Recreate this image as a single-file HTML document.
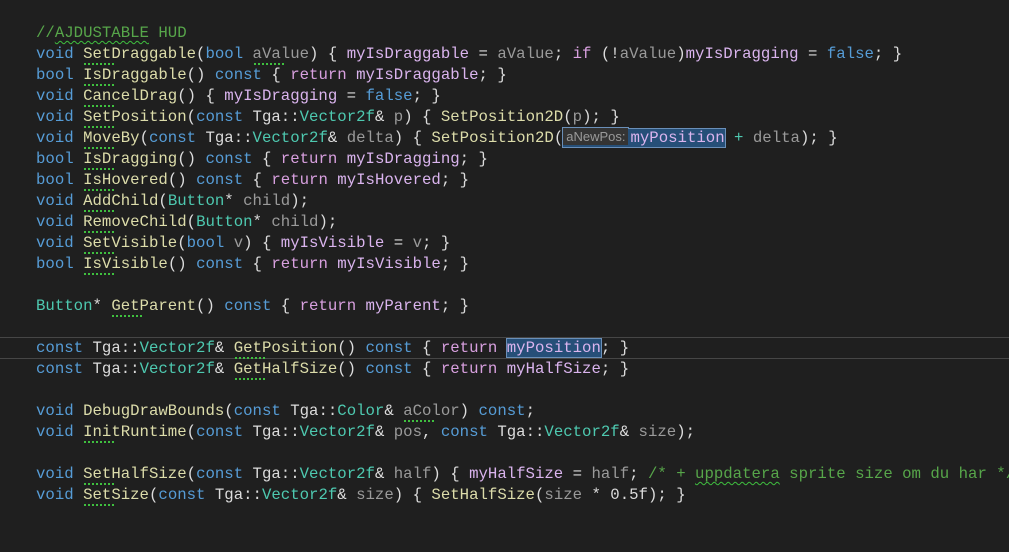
<!DOCTYPE html>
<html><head><meta charset="utf-8"><style>
html,body{margin:0;padding:0;background:#1f1f1f;width:1009px;height:552px;overflow:hidden}
#ed{position:absolute;left:36px;top:23px;font-family:"Liberation Mono",monospace;font-size:15.7px;line-height:21px;color:#dcdcdc}
.l{height:21px;white-space:pre}
.k{color:#569cd6}.f{color:#dcdcaa}.t{color:#4ec9b0}.m{color:#dab4ee}.c{color:#d8a0df}.p{color:#9a9a9a}.g{color:#57a64a}
.d{position:relative}
.d::after{content:"";position:absolute;left:1px;width:30px;bottom:-2px;border-bottom:2px dotted #3fbf3f}
.w{text-decoration:underline wavy #3fbf3f;text-decoration-thickness:1px;text-underline-offset:3px}
.hint{display:inline-block;background:#343434;color:#9a9a9a;font-family:"Liberation Sans",sans-serif;font-size:13px;line-height:17px;padding:0 3px;margin-right:2px;vertical-align:1px}
.sel{background:#264f78;outline:1px solid #6a8fb8}
#cur{position:absolute;left:0;top:337px;width:1009px;height:20px;border-top:1px solid #464646;border-bottom:1px solid #464646}
</style></head><body>
<div id="cur"></div>
<div id="ed"><div class="l g">//<span class="w">AJDUSTABLE</span> HUD</div><div class="l"><span class="k">void</span> <span class="f d">SetDraggable</span>(<span class="k">bool</span> <span class="p d">aValue</span>) { <span class="m">myIsDraggable</span> = <span class="p">aValue</span>; <span class="c">if</span> (!<span class="p">aValue</span>)<span class="m">myIsDragging</span> = <span class="k">false</span>; }</div><div class="l"><span class="k">bool</span> <span class="f d">IsDraggable</span>() <span class="k">const</span> { <span class="c">return</span> <span class="m">myIsDraggable</span>; }</div><div class="l"><span class="k">void</span> <span class="f d">CancelDrag</span>() { <span class="m">myIsDragging</span> = <span class="k">false</span>; }</div><div class="l"><span class="k">void</span> <span class="f d">SetPosition</span>(<span class="k">const</span> Tga::<span class="t">Vector2f</span>&amp; <span class="p">p</span>) { <span class="f">SetPosition2D</span>(<span class="p">p</span>); }</div><div class="l"><span class="k">void</span> <span class="f d">MoveBy</span>(<span class="k">const</span> Tga::<span class="t">Vector2f</span>&amp; <span class="p">delta</span>) { <span class="f">SetPosition2D</span>(<span class="sel"><span class="hint">aNewPos:</span><span class="m">myPosition</span></span> <span class="t">+</span> <span class="p">delta</span>); }</div><div class="l"><span class="k">bool</span> <span class="f d">IsDragging</span>() <span class="k">const</span> { <span class="c">return</span> <span class="m">myIsDragging</span>; }</div><div class="l"><span class="k">bool</span> <span class="f d">IsHovered</span>() <span class="k">const</span> { <span class="c">return</span> <span class="m">myIsHovered</span>; }</div><div class="l"><span class="k">void</span> <span class="f d">AddChild</span>(<span class="t">Button</span>* <span class="p">child</span>);</div><div class="l"><span class="k">void</span> <span class="f d">RemoveChild</span>(<span class="t">Button</span>* <span class="p">child</span>);</div><div class="l"><span class="k">void</span> <span class="f d">SetVisible</span>(<span class="k">bool</span> <span class="p">v</span>) { <span class="m">myIsVisible</span> = <span class="p">v</span>; }</div><div class="l"><span class="k">bool</span> <span class="f d">IsVisible</span>() <span class="k">const</span> { <span class="c">return</span> <span class="m">myIsVisible</span>; }</div><div class="l"> </div><div class="l"><span class="t">Button</span>* <span class="f d">GetParent</span>() <span class="k">const</span> { <span class="c">return</span> <span class="m">myParent</span>; }</div><div class="l"> </div><div class="l"><span class="k">const</span> Tga::<span class="t">Vector2f</span>&amp; <span class="f d">GetPosition</span>() <span class="k">const</span> { <span class="c">return</span> <span class="m sel">myPosition</span>; }</div><div class="l"><span class="k">const</span> Tga::<span class="t">Vector2f</span>&amp; <span class="f d">GetHalfSize</span>() <span class="k">const</span> { <span class="c">return</span> <span class="m">myHalfSize</span>; }</div><div class="l"> </div><div class="l"><span class="k">void</span> <span class="f">DebugDrawBounds</span>(<span class="k">const</span> Tga::<span class="t">Color</span>&amp; <span class="p d">aColor</span>) <span class="k">const</span>;</div><div class="l"><span class="k">void</span> <span class="f d">InitRuntime</span>(<span class="k">const</span> Tga::<span class="t">Vector2f</span>&amp; <span class="p">pos</span>, <span class="k">const</span> Tga::<span class="t">Vector2f</span>&amp; <span class="p">size</span>);</div><div class="l"> </div><div class="l"><span class="k">void</span> <span class="f d">SetHalfSize</span>(<span class="k">const</span> Tga::<span class="t">Vector2f</span>&amp; <span class="p">half</span>) { <span class="m">myHalfSize</span> = <span class="p">half</span>; <span class="g">/* + <span class="w">uppdatera</span> sprite size om du har */</span></div><div class="l"><span class="k">void</span> <span class="f d">SetSize</span>(<span class="k">const</span> Tga::<span class="t">Vector2f</span>&amp; <span class="p">size</span>) { <span class="f">SetHalfSize</span>(<span class="p">size</span> * 0.5f); }</div></div>
</body></html>
